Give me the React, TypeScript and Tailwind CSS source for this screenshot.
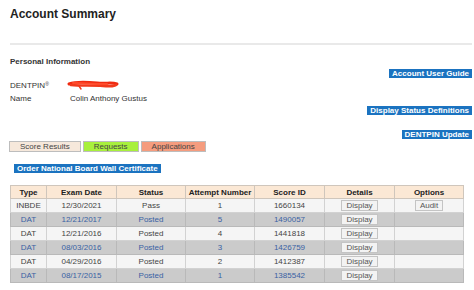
import React from "react";

const rows = [
  { type: "INBDE", date: "12/30/2021", status: "Pass", attempt: "1", id: "1660134", audit: true },
  { type: "DAT", date: "12/21/2017", status: "Posted", attempt: "5", id: "1490057" },
  { type: "DAT", date: "12/21/2016", status: "Posted", attempt: "4", id: "1441818" },
  { type: "DAT", date: "08/03/2016", status: "Posted", attempt: "3", id: "1426759" },
  { type: "DAT", date: "04/29/2016", status: "Posted", attempt: "2", id: "1412387" },
  { type: "DAT", date: "08/17/2015", status: "Posted", attempt: "1", id: "1385542" },
];

function BlueBtn({ children }: { children: React.ReactNode }) {
  return (
    <span className="block bg-[#1b73c0] text-white font-bold text-[8px] leading-[9px] px-[3px] whitespace-nowrap">
      {children}
    </span>
  );
}

function GrayBtn({ children }: { children: React.ReactNode }) {
  return (
    <span className="inline-flex bg-[#f3f3f3] border border-[#c4c4c4] text-[#555] text-[8px] leading-[9px] px-[4px] whitespace-nowrap align-middle">
      {children}
    </span>
  );
}

export default function App() {
  return (
    <div
      className="w-[474px] h-[290px] bg-white pl-[10px] pr-[2px] overflow-hidden text-[#333]"
      style={{ fontFamily: '"Liberation Sans", Arial, sans-serif' }}
    >
      <div className="pt-[6px] text-[12px] leading-[16px] font-bold text-[#222]">Account Summary</div>
      <div className="mt-[21px] h-[2px] bg-[#e9e9e9]" />

      <div className="mt-[12px] flex justify-between">
        <div className="relative">
          <div className="text-[8px] leading-[10px] font-bold text-[#333]">Personal Information</div>
          <div className="mt-[14px] text-[8px] leading-[10px] text-[#333]">
            DENTPIN<sup className="text-[5px]">®</sup>
          </div>
          <div className="mt-[3px] flex text-[8px] leading-[10px] text-[#333]">
            <span className="w-[60px]">Name</span>
            <span>Colin Anthony Gustus</span>
          </div>
          <svg className="absolute left-[57px] top-[22px]" width="52" height="12" viewBox="0 0 52 12">
            <path d="M2 5 C10 2, 20 3, 30 4 S44 3, 50 5" stroke="#f02a10" strokeWidth="3" fill="none" strokeLinecap="round" />
            <path d="M4 6 C14 7, 26 6, 36 7 S46 7, 49 6" stroke="#f23a1c" strokeWidth="2.5" fill="none" strokeLinecap="round" />
            <path d="M6 4 C16 4, 24 5, 40 5" stroke="#ff4a2a" strokeWidth="2" fill="none" strokeLinecap="round" />
            <path d="M12 7 L14 10" stroke="#f23a1c" strokeWidth="1.5" fill="none" strokeLinecap="round" />
          </svg>
        </div>
        <div className="flex flex-col items-end">
          <div className="mt-[12px] flex">
            <BlueBtn>Account User Guide</BlueBtn>
          </div>
          <div className="mt-[28px] flex">
            <BlueBtn>Display Status Definitions</BlueBtn>
          </div>
          <div className="mt-[15px] flex">
            <BlueBtn>DENTPIN Update</BlueBtn>
          </div>
        </div>
      </div>

      <div className="mt-[2px] -ml-[1px] flex gap-[2px] text-[8px] leading-[9px] text-[#444]">
        <span className="border border-[#bdbdbd] bg-[#f6e8db] px-[10px]">Score Results</span>
        <span className="border border-[#bdbdbd] bg-[#a8f03c] px-[10px]">Requests</span>
        <span className="border border-[#bdbdbd] bg-[#f59c7e] px-[10px]">Applications</span>
      </div>

      <div className="mt-[12px] ml-[4px] flex">
        <BlueBtn>Order National Board Wall Certificate</BlueBtn>
      </div>

      <table className="mt-[12px] table-fixed border-collapse w-[453px] text-[8px] leading-[9px] text-center">
        <colgroup>
          <col className="w-[36px]" />
          <col className="w-[70px]" />
          <col className="w-[69px]" />
          <col className="w-[69px]" />
          <col className="w-[70px]" />
          <col className="w-[70px]" />
          <col className="w-[69px]" />
        </colgroup>
        <thead>
          <tr className="h-[13px] bg-[#fbe8d5] text-[#222] font-bold">
            {["Type", "Exam Date", "Status", "Attempt Number", "Score ID", "Details", "Options"].map((h) => (
              <th key={h} className="border border-[#cfc6bc] p-0 font-bold">
                {h}
              </th>
            ))}
          </tr>
        </thead>
        <tbody>
          {rows.map((r, i) => {
            const odd = i % 2 === 1;
            const cell = odd
              ? "border border-[#b9b9b9] p-0 text-[#3a62a4]"
              : "border border-[#d2d2d2] p-0 text-[#444]";
            return (
              <tr key={i} className={odd ? "h-[14px] bg-[#cbcbcb]" : "h-[14px] bg-[#f5f5f5]"}>
                <td className={cell}>{r.type}</td>
                <td className={cell}>{r.date}</td>
                <td className={cell}>{r.status}</td>
                <td className={cell}>{r.attempt}</td>
                <td className={cell}>{r.id}</td>
                <td className={cell}>
                  <GrayBtn>Display</GrayBtn>
                </td>
                <td className={cell}>{r.audit ? <GrayBtn>Audit</GrayBtn> : null}</td>
              </tr>
            );
          })}
        </tbody>
      </table>
    </div>
  );
}
